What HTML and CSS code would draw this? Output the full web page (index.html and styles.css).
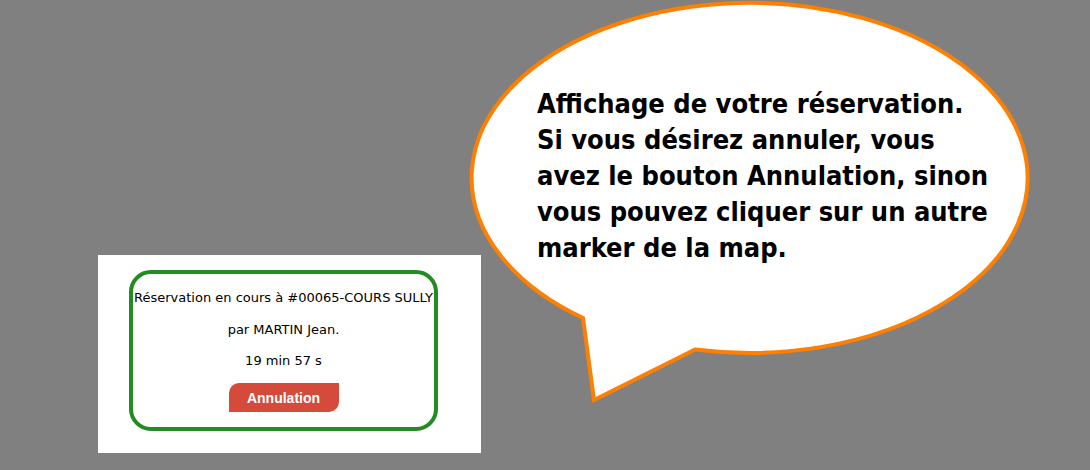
FILE: index.html
```html
<!DOCTYPE html>
<html lang="fr">
<head>
<meta charset="utf-8">
<link rel="stylesheet" href="styles.css">
</head>
<body>
<div class="stage">
  <div class="panel">
    <div class="resa">
      <p class="line l1">Réservation en cours à #00065-COURS SULLY</p>
      <p class="line l2">par MARTIN Jean.</p>
      <p class="line l3">19 min 57 s</p>
      <button class="cancel">Annulation</button>
    </div>
  </div>
  <svg class="bubble" width="1090" height="470" viewBox="0 0 1090 470">
    <path d="M583,318 L594,400 L695,349.5 A278,175 0 1 0 583,318 Z" fill="#fff" stroke="#ff8000" stroke-width="4" stroke-linejoin="miter"/>
  </svg>
  <div class="bubble-text">Affichage de votre réservation.<br>Si vous désirez annuler, vous<br>avez le bouton Annulation, sinon<br>vous pouvez cliquer sur un autre<br>marker de la map.</div>
</div>
</body>
</html>
```
FILE: styles.css
```css
html, body {
  margin: 0;
  padding: 0;
  background: #808080;
}
.stage {
  position: relative;
  width: 1090px;
  height: 470px;
  overflow: hidden;
  display: flex;
  align-items: flex-start;
}
.panel {
  margin-top: 255px;
  margin-left: 98px;
  width: 383px;
  height: 198px;
  background: #fff;
  box-sizing: border-box;
  padding: 15px 0 0 31px;
}
.resa {
  width: 309px;
  height: 161px;
  box-sizing: border-box;
  border: 4px solid #228b22;
  border-radius: 22px;
  display: flex;
  flex-direction: column;
  align-items: center;
  font-family: "DejaVu Sans", Verdana, sans-serif;
  font-size: 13px;
  color: #000;
}
.line {
  margin: 0;
  line-height: 15px;
  white-space: nowrap;
}
.l1 { margin-top: 16px; }
.l2 { margin-top: 17px; }
.l3 { margin-top: 16px; }
.cancel {
  margin-top: 15px;
  width: 110px;
  height: 29px;
  border: none;
  background: #d54b3b;
  color: #fff;
  font-family: "Liberation Sans", Arial, sans-serif;
  font-weight: bold;
  font-size: 14px;
  border-radius: 10px 0 10px 0;
  padding: 0;
}
.bubble {
  position: absolute;
  left: 0;
  top: 0;
}
.bubble-text {
  position: absolute;
  left: 537px;
  top: 86px;
  font-family: "DejaVu Sans Condensed", "DejaVu Sans", sans-serif;
  font-weight: bold;
  font-size: 27px;
  line-height: 36px;
  color: #000;
  white-space: nowrap;
}
```
